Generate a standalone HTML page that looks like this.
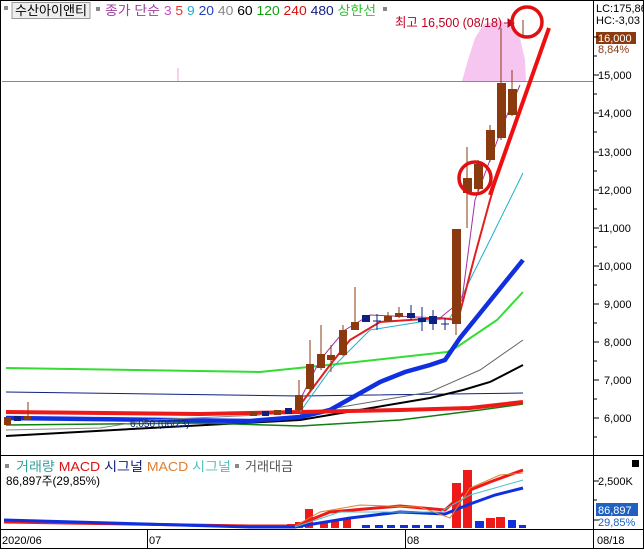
<!DOCTYPE html>
<html><head><meta charset="utf-8"><style>
html,body{margin:0;padding:0;background:#fff;width:644px;height:549px;overflow:hidden}
svg{display:block;font-family:"Liberation Sans","Noto Sans CJK KR",sans-serif}
</style></head><body>
<svg width="644" height="549" viewBox="0 0 644 549" xmlns="http://www.w3.org/2000/svg">
<rect x="0" y="0" width="644" height="549" fill="#fff"/>
<rect x="0.5" y="0.5" width="643" height="548" fill="none" stroke="#000"/>
<line x1="593.5" y1="0" x2="593.5" y2="549" stroke="#000"/>
<line x1="0" y1="455.5" x2="644" y2="455.5" stroke="#000"/>
<line x1="0" y1="529.5" x2="644" y2="529.5" stroke="#000"/>
<line x1="147.5" y1="529" x2="147.5" y2="549" stroke="#000"/>
<line x1="405.5" y1="529" x2="405.5" y2="549" stroke="#000"/>
<path d="M462,81 L468,60 L475,38 L484,24 L500,20 L512,28 L520,38 L525,60 L526,81 Z" fill="#f6c6f0"/>
<path d="M178,68 L178,82" stroke="#f0a0e0"/>
<line x1="2" y1="81.5" x2="593" y2="81.5" stroke="#888"/>
<rect x="4" y="6" width="4" height="4" fill="#888"/>
<rect x="12" y="2.5" width="78" height="16" fill="#eee" stroke="#999"/>
<text x="15" y="15" font-size="13" fill="#000" textLength="72" lengthAdjust="spacingAndGlyphs">수산아이앤티</text>
<rect x="96" y="7" width="4" height="4" fill="#888"/>
<text x="105" y="15" font-size="13" textLength="271" lengthAdjust="spacingAndGlyphs"><tspan fill="#a040a0">종가 단순</tspan><tspan fill="#c050c0"> 3</tspan><tspan fill="#e03030"> 5</tspan><tspan fill="#20b0d0"> 9</tspan><tspan fill="#2040c0"> 20</tspan><tspan fill="#888"> 40</tspan><tspan fill="#000"> 60</tspan><tspan fill="#10a010"> 120</tspan><tspan fill="#d01010"> 240</tspan><tspan fill="#102080"> 480</tspan><tspan fill="#30c030"> 상한선</tspan></text>
<rect x="383" y="7" width="4" height="4" fill="#888"/>
<text x="395" y="27" font-size="13" fill="#c00020" textLength="107" lengthAdjust="spacingAndGlyphs">최고 16,500 (08/18)</text>
<path d="M504,23 L512,23 M508,19 L514,23 L508,27 Z" fill="#c00020" stroke="#c00020"/>
<text x="596" y="12" font-size="11" fill="#000">LC:175,86</text>
<text x="596" y="24" font-size="11" fill="#000">HC:-3,03</text>
<rect x="596" y="32" width="40" height="12" fill="#8b3a10"/>
<text x="598" y="42" font-size="11" fill="#fff">16,000</text>
<text x="598" y="53" font-size="11" fill="#8b3a10">8,84%</text>
<g font-size="11" fill="#000">
<text x="598" y="79">15,000</text><text x="598" y="117">14,000</text><text x="598" y="156">13,000</text>
<text x="598" y="194">12,000</text><text x="598" y="232">11,000</text><text x="598" y="270">10,000</text>
<text x="604" y="308">9,000</text><text x="604" y="346">8,000</text><text x="604" y="384">7,000</text>
<text x="604" y="422">6,000</text>
<text x="598" y="485">2,500K</text>
</g>
<g stroke="#000"><path d="M594,37h4M594,56h3M594,75h5M594,94h3M594,113h5M594,132h3M594,152h5M594,171h3M594,190h5M594,209h3M594,228h5M594,247h3M594,266h5M594,285h3M594,304h5M594,323h3M594,342h5M594,361h3M594,380h5M594,399h3M594,418h5M594,437h3M594,481h5M594,500h3M594,520h5"/></g>
<rect x="596" y="503" width="42" height="13" fill="#2060c0"/>
<text x="598" y="514" font-size="11" fill="#fff">86,897</text>
<text x="598" y="526" font-size="11" fill="#2060c0">29,85%</text>
<rect x="632" y="460" width="7" height="7" fill="#000"/>
<g font-size="11" fill="#000"><text x="2" y="544">2020/06</text><text x="149" y="544">07</text><text x="407" y="544">08</text><text x="597" y="544">08/18</text></g>
<g fill="none">
<path d="M6,368 L260,372 L347,363 L447,352 L457,347 L497,320 L523,292" stroke="#33dd33" stroke-width="2"/>
<path d="M6,392 L300,396 L523,393" stroke="#102080" stroke-width="1"/>
<path d="M6,436 L150,428 L300,420 L430,398 L463,390 L490,382 L523,365" stroke="#000" stroke-width="2"/>
<path d="M300,414 L430,392 L480,370 L523,340" stroke="#666" stroke-width="1"/>
<path d="M6,425 L200,423 L300,426 L400,420 L480,410 L523,404" stroke="#108010" stroke-width="1.5"/>
<path d="M6,418 L250,421 L300,417 L330,410 L355,396 L380,382 L405,372 L430,365 L445,360 L460,338 L477,317 L523,260" stroke="#1030e0" stroke-width="4.5"/>
<path d="M6,412 L200,414 L300,412 L400,410 L470,408 L523,402" stroke="#ee1a1a" stroke-width="4"/>
<path d="M300,412 L330,370 L370,330 L420,322 L450,318 L460,300 L490,240 L523,173" stroke="#20b0d0" stroke-width="1"/>
<path d="M300,405 L330,365 L350,340 L380,322 L440,318 L458,320 L475,255 L490,200 L505,150 L520,110" stroke="#e02020" stroke-width="2"/>
<path d="M300,400 L320,360 L345,330 L370,315 L440,318 L462,300 L475,200 L490,160 L505,120 L520,85" stroke="#a030a0" stroke-width="1"/>
<path d="M6,430 L100,428 L150,420 L260,415" stroke="#888" stroke-width="1"/>
<path d="M490,195 L549,28" stroke="#ee1010" stroke-width="4"/>
</g>
<g>
<rect x="4" y="417" width="7" height="8" fill="#8b3a10"/>
<rect x="14" y="416" width="7" height="5" fill="#102080"/>
<rect x="24" y="416" width="7" height="4" fill="#8b3a10"/>
<line x1="28" y1="402" x2="28" y2="416" stroke="#8b3a10"/>
<rect x="250" y="412" width="7" height="4" fill="#8b3a10"/>
<rect x="262" y="411" width="7" height="5" fill="#102080"/>
<rect x="274" y="410" width="7" height="5" fill="#8b3a10"/>
<rect x="285" y="408" width="7" height="6" fill="#102080"/>
</g>
<text x="130" y="427" font-size="10" fill="#102080">6,050 (06/23)</text>
<g stroke="#8b3a10" stroke-width="1">
<line x1="299" y1="380" x2="299" y2="412"/><line x1="310" y1="340" x2="310" y2="392"/>
<line x1="321" y1="325" x2="321" y2="370"/><line x1="331" y1="345" x2="331" y2="372"/>
<line x1="343" y1="325" x2="343" y2="356"/><line x1="355" y1="287" x2="355" y2="330"/>
<line x1="388" y1="312" x2="388" y2="322"/><line x1="399" y1="307" x2="399" y2="318"/>
<line x1="456" y1="229" x2="456" y2="335"/><line x1="467" y1="147" x2="467" y2="228"/>
<line x1="478" y1="160" x2="478" y2="192"/><line x1="490" y1="125" x2="490" y2="162"/>
<line x1="501" y1="28" x2="501" y2="140"/><line x1="512" y1="70" x2="512" y2="116"/>
<line x1="523" y1="20" x2="523" y2="37"/>
</g>
<g fill="#8b3a10">
<rect x="295" y="395" width="8" height="15"/><rect x="306" y="364" width="8" height="25"/>
<rect x="317" y="354" width="8" height="14"/><rect x="327" y="355" width="8" height="5"/>
<rect x="339" y="330" width="8" height="25"/><rect x="351" y="322" width="8" height="8"/>
<rect x="384" y="316" width="8" height="5"/><rect x="395" y="313" width="8" height="4"/>
<rect x="452" y="229" width="9" height="95"/><rect x="463" y="178" width="9" height="15"/>
<rect x="474" y="164" width="9" height="25"/><rect x="486" y="130" width="9" height="30"/>
<rect x="497" y="83" width="9" height="55"/><rect x="508" y="89" width="9" height="26"/>
</g>
<g stroke="#102080"><line x1="377" y1="314" x2="377" y2="330"/><line x1="373" y1="321" x2="381" y2="321"/>
<line x1="422" y1="307" x2="422" y2="331"/><line x1="433" y1="310" x2="433" y2="330"/>
<line x1="445" y1="318" x2="445" y2="330"/><line x1="441" y1="324" x2="449" y2="324"/>
<line x1="411" y1="305" x2="411" y2="320"/></g>
<g fill="#102080"><rect x="362" y="315" width="8" height="7"/><rect x="407" y="313" width="8" height="5"/>
<rect x="418" y="318" width="8" height="4"/><rect x="429" y="316" width="8" height="8"/></g>
<circle cx="475" cy="178" r="16" fill="none" stroke="#e01010" stroke-width="3.5"/>
<circle cx="527" cy="22" r="15" fill="none" stroke="#e01010" stroke-width="3.5"/>
<rect x="5" y="464" width="4" height="4" fill="#888"/>
<text x="16" y="471" font-size="13" textLength="215" lengthAdjust="spacingAndGlyphs"><tspan fill="#30a0a0">거래량</tspan><tspan fill="#e01010"> MACD</tspan><tspan fill="#102080"> 시그널</tspan><tspan fill="#e08030"> MACD</tspan><tspan fill="#50c0c0"> 시그널</tspan></text>
<rect x="235" y="464" width="4" height="4" fill="#888"/>
<text x="245" y="471" font-size="13" fill="#555" textLength="48" lengthAdjust="spacingAndGlyphs">거래대금</text>
<text x="6" y="485" font-size="12" fill="#000" textLength="94" lengthAdjust="spacingAndGlyphs">86,897주(29,85%)</text>
<g fill="#ee1a1a">
<rect x="305" y="509" width="8" height="19"/><rect x="277" y="525" width="8" height="3"/>
<rect x="287" y="524" width="8" height="4"/><rect x="295" y="522" width="8" height="6"/>
<rect x="320" y="523" width="8" height="5"/><rect x="331" y="520" width="8" height="8"/><rect x="343" y="519" width="8" height="9"/>
<rect x="452" y="483" width="9" height="45"/><rect x="463" y="470" width="9" height="58"/>
<rect x="486" y="518" width="9" height="10"/><rect x="496" y="517" width="9" height="11"/>
</g>
<g fill="#1030e0">
<rect x="475" y="521" width="9" height="7"/><rect x="508" y="520" width="8" height="8"/><rect x="519" y="525" width="7" height="3"/>
<rect x="362" y="525" width="8" height="3"/><rect x="375" y="525" width="8" height="3"/><rect x="387" y="525" width="8" height="3"/>
<rect x="400" y="525" width="8" height="3"/><rect x="412" y="525" width="8" height="3"/><rect x="424" y="525" width="8" height="3"/><rect x="436" y="525" width="8" height="3"/>
</g>
<g fill="none">
<path d="M4,522 L250,526 L295,526 L330,512 L400,506 L445,510 L465,492 L490,482 L523,470" stroke="#ee1a1a" stroke-width="3"/>
<path d="M4,520 L250,527 L295,527 L350,518 L400,512 L445,514 L470,504 L495,495 L523,488" stroke="#1030e0" stroke-width="3"/>
<path d="M295,526 L320,512 L360,505 L420,507 L450,518 L470,488 L500,475 L523,473" stroke="#e08030" stroke-width="1"/>
<path d="M295,527 L340,512 L440,512 L470,495 L523,480" stroke="#50c0c0" stroke-width="1"/>
</g>
</svg>
</body></html>
